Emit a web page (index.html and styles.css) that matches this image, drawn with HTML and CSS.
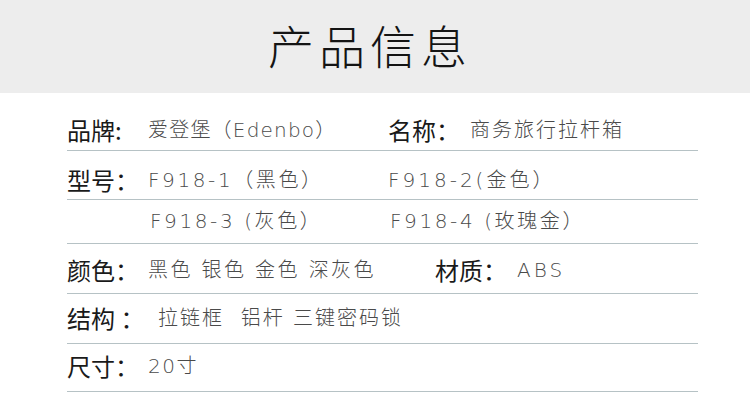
FILE: index.html
```html
<!DOCTYPE html>
<html lang="zh-CN">
<head>
<meta charset="utf-8">
<title>产品信息</title>
<link rel="stylesheet" href="styles.css">
</head>
<body>
<header class="banner"><h1 class="title">产品信息</h1></header>
<section class="specs">
  <div class="row r1">
    <div class="cell left"><span class="label">品牌:</span><span class="value sp1">爱登堡（Edenbo）</span></div>
    <div class="cell"><span class="label">名称：</span><span class="value sp2">商务旅行拉杆箱</span></div>
  </div>
  <div class="row r2">
    <div class="cell left"><span class="label">型号：</span><span class="value sp25">F918-1（黑色）</span></div>
    <div class="cell"><span class="value sp3">F918-2(金色）</span></div>
  </div>
  <div class="row r3">
    <div class="cell left"><span class="label"></span><span class="value sp25 nudge">F918-3 (灰色）</span></div>
    <div class="cell"><span class="value sp25 nudge">F918-4 (玫瑰金）</span></div>
  </div>
  <div class="row r4">
    <div class="cell left"><span class="label">颜色：</span><span class="value sp23">黑色 银色 金色 深灰色</span></div>
    <div class="cell shift"><span class="label">材质：</span><span class="value sp3">ABS</span></div>
  </div>
  <div class="row r5">
    <div class="cell left wide"><span class="label">结构 ：</span><span class="value sp2 indent">拉链框&nbsp; 铝杆 三键密码锁</span></div>
  </div>
  <div class="row r6">
    <div class="cell left"><span class="label">尺寸：</span><span class="value sp15">20寸</span></div>
  </div>
</section>
</body>
</html>
```

FILE: styles.css
```css
* { box-sizing: border-box; }
html, body { margin: 0; padding: 0; }
body {
  width: 750px;
  height: 406px;
  background: #fff;
  font-family: "Noto Sans CJK SC", "Noto Sans", sans-serif;
  overflow: hidden;
}
.banner {
  height: 93px;
  background: #ededed;
  display: flex;
  align-items: center;
  justify-content: center;
  padding-bottom: 6px;
  padding-right: 10px;
}
.title {
  margin: 0;
  font-size: 46px;
  font-weight: 300;
  color: #141414;
  letter-spacing: 5px;
  line-height: 1;
}
.specs {
  margin-left: 67px;
  width: 631px;
  display: flex;
  flex-direction: column;
}
.row {
  display: flex;
  align-items: flex-end;
  border-bottom: 1px solid #b6c2c5;
}
.r1 { height: 58px; padding-bottom: 7px; }
.r2 { height: 49px; padding-bottom: 6px; }
.r3 { height: 44px; padding-bottom: 9px; }
.r4 { height: 50px; padding-bottom: 10px; }
.r5 { height: 50px; padding-bottom: 12px; }
.r6 { height: 48px; padding-bottom: 12px; }
.cell {
  display: flex;
  align-items: center;
  line-height: 26px;
}
.left { width: 321px; }
.wide { width: auto; }
.shift { margin-left: 47px; }
.label {
  width: 81px;
  font-size: 24px;
  font-weight: 400;
  color: #1a1a1a;
  white-space: nowrap;
}
.cell:not(.left) .label { width: 82px; }
.value {
  font-family: "DejaVu Sans", "Noto Sans CJK SC", sans-serif;
  font-size: 20px;
  font-weight: 200;
  color: #4a4a4a;
  white-space: nowrap;
}
.sp1 { letter-spacing: 1.2px; }
.sp15 { letter-spacing: 1.5px; }
.sp2 { letter-spacing: 2px; }
.sp23 { letter-spacing: 2.4px; }
.sp25 { letter-spacing: 2.6px; }
.sp3 { letter-spacing: 3px; }
.nudge { margin-left: 2px; }
.indent { margin-left: 10px; }
```
